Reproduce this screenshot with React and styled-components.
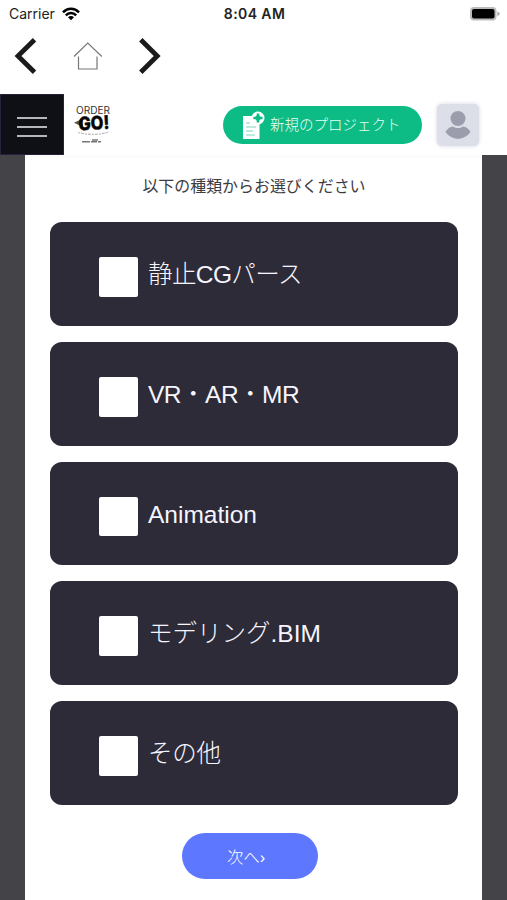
import React, {useState} from 'react'
import styled, {createGlobalStyle} from 'styled-components'

const GlobalStyle = createGlobalStyle`
* {
    box-sizing: border-box;
}

body {
    margin: 0;
    background-color: #fff;
    font-family: "Liberation Sans", "Noto Sans CJK JP", sans-serif;
}

button {
    border: none;
    padding: 0;
    background: none;
    font-family: inherit;
}
`

const Container = styled.div`
display: flex;
flex-direction: column;
width: 100%;
height: 900px;
overflow: hidden;
`

//상태바
const StatusBar = styled.div`
display: grid;
grid-template-columns: 1fr auto 1fr;
align-items: center;
height: 27px;
padding: 0 7px 0 9px;
font-family: Inter, sans-serif;
font-size: 14px;
color: #222;
`

const Carrier = styled.div`
display: flex;
align-items: center;
gap: 7px;
`

const Time = styled.div`
font-weight: 600;
font-size: 14px;
letter-spacing: 0.4px;
`

const Battery = styled.svg`
justify-self: end;
`

const NavBar = styled.nav`
display: flex;
align-items: center;
height: 67px;
padding: 0 0 10px 14px;
`

const NavButton = styled.button`
display: flex;
margin-right: ${(props) => props.$gap || '0'};
`

//헤더
const Header = styled.header`
display: flex;
align-items: center;
height: 61px;
flex-shrink: 0;
`

const MenuButton = styled.button`
display: flex;
flex-direction: column;
align-items: center;
justify-content: center;
gap: 7px;
width: 64px;
height: 61px;
padding-top: 4px;
background-color: #0f1016;
border: solid 1px #24233b;
`

const MenuLine = styled.span`
width: 30px;
height: 2px;
background-color: #b6b6ba;
`

const Logo = styled.svg`
margin-left: 10px;
`

const ProjectButton = styled.button`
display: flex;
align-items: center;
width: 199px;
height: 38px;
margin-left: auto;
padding-left: 18px;
border-radius: 19px;
background-color: #0dbb85;
color: #e9fff6;
font-size: 14.5px;
font-weight: 300;
white-space: nowrap;
`

const ProjectLabel = styled.span`
margin-left: 5px;
padding-bottom: 2px;
`

const Avatar = styled.button`
display: flex;
align-items: center;
justify-content: center;
width: 42px;
height: 42px;
margin: 0 28px 0 15px;
border-radius: 5px;
background-color: #dcdee8;
box-shadow: 0 0 4px #d5d8e6;
`

//본문
const Body = styled.div`
flex: 1;
padding: 0 25px;
background-color: #444347;
`

const Page = styled.main`
display: flex;
flex-direction: column;
align-items: center;
height: 100%;
padding: 0 24px 0 25px;
background-color: #fff;
border-top: solid 3px #fcfcfc;
`

const Title = styled.p`
margin: 17px 0 23.3px;
height: 24px;
line-height: 24px;
font-size: 15.95px;
color: #3c3c42;
`

const List = styled.div`
display: flex;
flex-direction: column;
gap: 16px;
width: 100%;
`

const Card = styled.label`
display: flex;
align-items: center;
height: 103.7px;
padding: 0 0 0 48.5px;
border-radius: 12px;
background-color: #2c2b37;
`

const CheckBox = styled.input`
appearance: none;
width: 39.5px;
height: 39.5px;
margin: 6px 10px 0 0;
border-radius: 2px;
background-color: #fff;

&:checked {
    border: solid 10px #fff;
    background-color: #5d78ff;
}
`

const CardText = styled.span`
height: 36px;
line-height: 37px;
font-size: 24.5px;
font-weight: 300;
letter-spacing: ${(props) => props.$spacing || 'normal'};
color: #f6f5ff;
`

const NextButton = styled.button`
width: 136px;
height: 46px;
margin: 28px 8px 0 0;
padding-right: 8px;
border-radius: 23px;
background-color: #5d78ff;
color: #fff;
font-size: 16.4px;
font-weight: 300;
`

const types = [
    {name: '静止CGパース', spacing: '-0.6px'},
    {name: 'VR・AR・MR', spacing: '-0.5px'},
    {name: 'Animation'},
    {name: 'モデリング.BIM'},
    {name: 'その他', spacing: '-0.3px'},
]

const WifiIcon = () => (
    <svg width="18" height="14" viewBox="0 0 18 14" fill="none" stroke="#000" strokeWidth="2.5">
        <path d="M1 5.3 C5.5 .6 12.5 .6 17 5.3" />
        <path d="M3.8 8.3 C6.8 5.3 11.2 5.3 14.2 8.3" />
        <path d="M6 10.2 C7.8 8.5 10.2 8.5 12 10.2 L9 13.3 Z" fill="#000" stroke="none" />
    </svg>
)

const BatteryIcon = () => (
    <Battery width="31" height="16" viewBox="0 0 31 16">
        <rect x="1" y="1" width="26.5" height="13.5" rx="4" fill="#bbb" />
        <rect x="3" y="3" width="22.5" height="9.5" rx="2" fill="#000" />
        <path d="M28.4 5.5 C31.5 6.7 31.5 9 28.4 10.2Z" fill="#aaa" />
    </Battery>
)

const LogoIcon = () => (
    <Logo width="40" height="50" viewBox="0 0 40 50">
        <text x="2" y="14" fontFamily="Inter" fontSize="10" textLength="34" lengthAdjust="spacingAndGlyphs" fill="#333">ORDER</text>
        <path d="M0 22.8 L9 18.5 V27 Z" fill="#555" />
        <text x="4.5" y="29.6" fontFamily="Inter" fontSize="18.5" fontWeight="800" textLength="31" lengthAdjust="spacingAndGlyphs" fill="#050505" stroke="#050505" strokeWidth=".4" transform="rotate(-3 20 25)">GO!</text>
        <path d="M4 32.5 Q20 36.5 35 32" fill="none" stroke="#bbb" strokeWidth="1.2" strokeDasharray="2 1 3 1" />
        <path d="M8 41.7 H27" stroke="#777" strokeWidth="1.6" strokeDasharray="8 1 6 1" />
        <path d="M18 40 H24" stroke="#777" strokeWidth="1.5" />
    </Logo>
)

const DocIcon = () => (
    <svg width="24" height="30" viewBox="0 0 24 30">
        <path d="M2 6 H18.5 V29 H2Z" fill="#fff" />
        <path d="M5 13 H9 M5 17 H15 M5 21 H12 M5 25 H14" stroke="#7ed5b9" strokeWidth="1.2" />
        <circle cx="17" cy="8" r="6.5" fill="#fff" />
        <path d="M17 3.4 V12.6 M12.4 8 H21.6" stroke="#0dbb85" strokeWidth="2.6" />
        <path d="M17 5.8 V10.2 M14.8 8 H19.2" stroke="#0dbb85" strokeWidth="4.4" />
    </svg>
)

const UserIcon = () => (
    <svg width="28" height="30" viewBox="0 0 28 30" fill="#9b9dac">
        <circle cx="14" cy="8.5" r="7.5" />
        <path d="M1.5 22 C3.5 18.5 6 17 9 16.6 C12 18.6 16 18.6 19 16.6 C22 17 24.5 18.5 26.5 22 C20 31 8 31 1.5 22Z" />
    </svg>
)

const App = () => {
    const [checked, setChecked] = useState([]);

    const handleChange = (type) => {
        setChecked(checked.includes(type) ? checked.filter((t) => t !== type) : [...checked, type]);
    }

    return (
        <>
        <GlobalStyle />
        <Container>
            <StatusBar>
                <Carrier>Carrier <WifiIcon /></Carrier>
                <Time>8:04 AM</Time>
                <BatteryIcon />
            </StatusBar>

            <NavBar>
                <NavButton $gap='35px'>
                    <svg width="24" height="36" viewBox="0 0 24 36" fill="none" stroke="#1b1b1d" strokeWidth="4.8">
                        <path d="M20.5 1.8 L4 18 L20.5 34.2" />
                    </svg>
                </NavButton>
                <NavButton $gap='35px'>
                    <svg width="30" height="30" viewBox="0 0 30 30" fill="none" stroke="#777" strokeWidth="1.2">
                        <path d="M1 15.5 L14.8 2 L28.8 15.5 M5.5 15.5 V28 H24 V15.5" />
                    </svg>
                </NavButton>
                <NavButton>
                    <svg width="24" height="36" viewBox="0 0 24 36" fill="none" stroke="#1b1b1d" strokeWidth="4.8">
                        <path d="M2.8 1.8 L19.2 18 L2.8 34.2" />
                    </svg>
                </NavButton>
            </NavBar>

            <Header>
                <MenuButton>
                    <MenuLine />
                    <MenuLine />
                    <MenuLine />
                </MenuButton>
                <LogoIcon />
                <ProjectButton>
                    <DocIcon />
                    <ProjectLabel>新規のプロジェクト</ProjectLabel>
                </ProjectButton>
                <Avatar><UserIcon /></Avatar>
            </Header>

            <Body>
                <Page>
                    <Title>以下の種類からお選びください</Title>
                    <List>
                        {types.map(({name, spacing}) => (
                            <Card key={name}>
                                <CheckBox type='checkbox' checked={checked.includes(name)} onChange={() => handleChange(name)} />
                                <CardText $spacing={spacing}>{name}</CardText>
                            </Card>
                        ))}
                    </List>
                    <NextButton>次へ›</NextButton>
                </Page>
            </Body>
        </Container>
        </>
    )
}

export default App
